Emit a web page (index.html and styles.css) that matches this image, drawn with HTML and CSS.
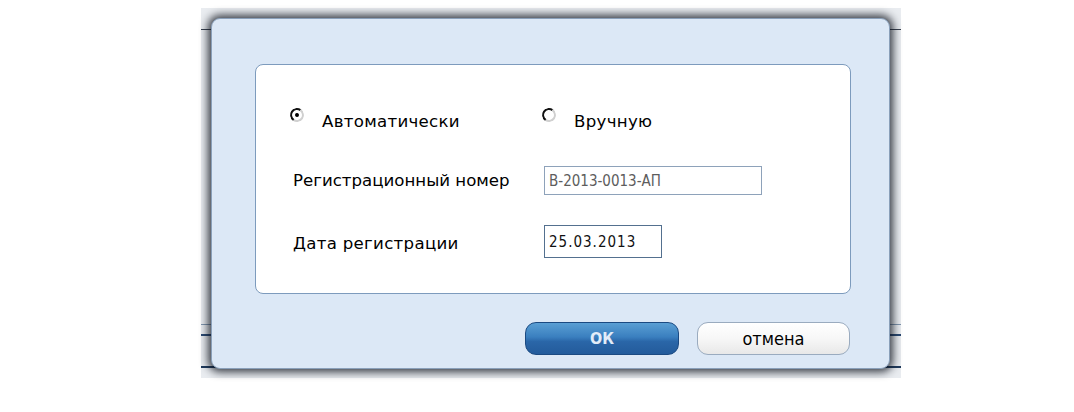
FILE: index.html
```html
<!DOCTYPE html>
<html lang="ru">
<head>
<meta charset="utf-8">
<title>Регистрация</title>
<link rel="stylesheet" href="styles.css">
</head>
<body>
<div class="shot">
  <div class="panel">
    <div class="box">
      <div class="radios">
        <label class="radio first"><span class="dot checked"></span><span class="rtext">Автоматически</span></label>
        <label class="radio"><span class="dot"></span><span class="rtext">Вручную</span></label>
      </div>
      <div class="row row-num">
        <span class="lbl">Регистрационный номер</span>
        <div class="field wide muted">В-2013-0013-АП</div>
      </div>
      <div class="row row-date">
        <span class="lbl">Дата регистрации</span>
        <div class="field narrow">25.03.2013</div>
      </div>
    </div>
    <div class="buttons">
      <button class="btn ok">ОК</button>
      <button class="btn cancel">отмена</button>
    </div>
  </div>
</div>
</body>
</html>
```

FILE: styles.css
```css
html, body {
  margin: 0;
  padding: 0;
  background: #ffffff;
}
body {
  width: 1074px;
  height: 412px;
  overflow: hidden;
  font-family: "DejaVu Sans", sans-serif;
  color: #000;
}
.shot {
  margin: 8px 0 0 201px;
  width: 700px;
  height: 370px;
  box-sizing: border-box;
  padding: 10px 11px 0 10px;
  background-color: #e9ecf0;
  background-image:
    linear-gradient(to bottom, transparent 21px, #3a4250 21px, #3a4250 22px, transparent 22px),
    linear-gradient(to bottom, transparent 316px, #7f95ad 316px, #7f95ad 317px, transparent 317px),
    linear-gradient(to bottom, transparent 326px, #2b4a73 326px, #2b4a73 328px, transparent 328px),
    linear-gradient(to bottom, transparent 358px, #203a5c 358px, #203a5c 360px, transparent 360px);
}
.panel {
  width: 679px;
  height: 351px;
  box-sizing: border-box;
  background: #dce8f6;
  border-radius: 9px;
  border: 1px solid #8aa0ba;
  box-shadow: 0 0 9px 3px rgba(10, 15, 25, 0.8);
  padding: 45px 0 0 43px;
  display: flex;
  flex-direction: column;
}
.box {
  width: 596px;
  height: 230px;
  box-sizing: border-box;
  background: #ffffff;
  border: 1px solid #7d9bbd;
  border-radius: 8px;
  padding: 42px 0 0 34px;
  display: flex;
  flex-direction: column;
}
.radios {
  display: flex;
  align-items: flex-start;
  height: 24px;
}
.radio {
  display: flex;
  align-items: flex-start;
  font-size: 16.6px;
  line-height: 20px;
}
.radio.first {
  width: 252px;
}
.rtext {
  margin-top: 5px;
  margin-left: 18px;
  letter-spacing: 0.3px;
}
.dot {
  width: 14px;
  height: 14px;
  margin-top: 1px;
  box-sizing: border-box;
  border-radius: 50%;
  border: 2px solid #111;
  border-right-color: #d0d0d0;
  border-bottom-color: #d0d0d0;
  transform: rotate(-10deg);
  background: #fff;
  position: relative;
  flex: none;
}
.dot.checked::after {
  content: "";
  position: absolute;
  left: 3px;
  top: 3px;
  width: 4px;
  height: 4px;
  border-radius: 50%;
  background: #000;
}
.row {
  display: grid;
  grid-template-columns: 251px auto;
  align-items: center;
  padding-left: 3px;
  font-size: 16.6px;
}
.row-num {
  margin-top: 35px;
}
.row-date {
  margin-top: 30px;
}
.row-date .lbl {
  padding-top: 3px;
  letter-spacing: 0.3px;
}
.lbl {
  white-space: nowrap;
}
.field {
  box-sizing: border-box;
  padding-left: 4px;
  display: flex;
  align-items: center;
  white-space: nowrap;
  font-family: "DejaVu Sans Condensed", "DejaVu Sans", sans-serif;
  font-size: 15px;
}
.field.wide {
  width: 218px;
  height: 29px;
  border: 1px solid #8ea2ba;
}
.field.narrow {
  width: 118px;
  height: 33px;
  border: 1px solid #53708f;
  color: #111;
  letter-spacing: 1px;
}
.field.muted {
  color: #5d5d5d;
}
.buttons {
  display: flex;
  gap: 18px;
  margin-top: 28px;
  padding-left: 270px;
}
.btn {
  width: 154px;
  height: 33px;
  box-sizing: border-box;
  border-radius: 11px;
  font-family: "DejaVu Sans Condensed", "DejaVu Sans", sans-serif;
  padding: 0;
  cursor: pointer;
}
.btn.ok {
  background: linear-gradient(to bottom, #5a9fd4 0%, #3a7fbf 45%, #2a66a8 60%, #235b9b 100%);
  border: 1px solid #1b4a82;
  color: #e2ecf8;
  font-size: 16px;
  font-weight: bold;
}
.btn.cancel {
  width: 153px;
  background: linear-gradient(to bottom, #ffffff 0%, #f7f7f7 50%, #e8e8e8 100%);
  border: 1px solid #9aabbf;
  color: #000;
  font-size: 18px;
}
```
